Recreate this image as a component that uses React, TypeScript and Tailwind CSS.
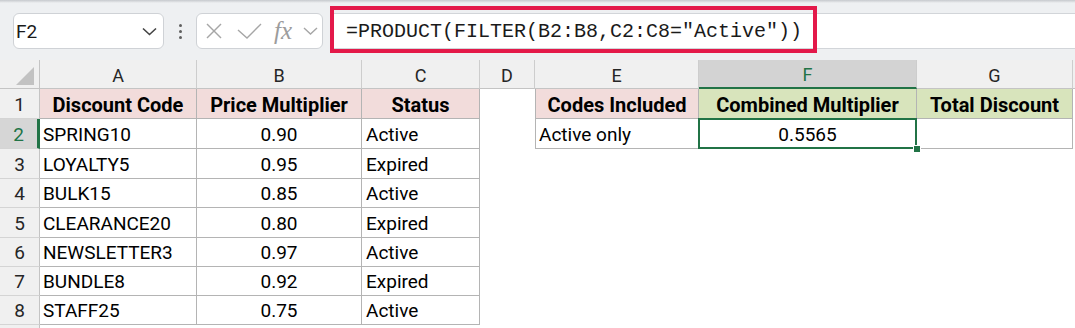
import React from "react";

const rows: [string, string, string][] = [
  ["SPRING10", "0.90", "Active"],
  ["LOYALTY5", "0.95", "Expired"],
  ["BULK15", "0.85", "Active"],
  ["CLEARANCE20", "0.80", "Expired"],
  ["NEWSLETTER3", "0.97", "Active"],
  ["BUNDLE8", "0.92", "Expired"],
  ["STAFF25", "0.75", "Active"],
];

const rowH = [
  "h-[30px]",
  "h-[30px]",
  "h-[30px]",
  "h-[29px]",
  "h-[30px]",
  "h-[29px]",
  "h-[29px]",
  "h-[29px]",
];

const cellBase = "shrink-0 flex items-end pb-[2px] leading-[22px]";
const headBase = "shrink-0 flex items-end justify-center pb-[2px] leading-[22px] font-bold text-[20px]";
const tb = "border-[#b4b4b4]";

function RowHead({ n, h, selected }: { n: number; h: string; selected?: boolean }) {
  return (
    <div
      className={`${h} w-[40px] shrink-0 flex items-end justify-center pb-[2px] leading-[22px] border-b border-[#d4d4d4] ${
        selected
          ? "bg-[#d6d6d6] text-[#217346] border-r-[3px] border-r-[#217346]"
          : "bg-[#f0f0f0] text-[#262626] border-r border-r-[#c4c4c4]"
      }`}
    >
      {n}
    </div>
  );
}

function ColHead({ w, label, selected }: { w: string; label: string; selected?: boolean }) {
  return (
    <div
      className={`${w} h-full shrink-0 flex items-center justify-center text-[18px] border-r border-[#cdcdcd] ${
        selected
          ? "bg-[#d3d3d3] text-[#217346] border-b-2 border-b-[#217346]"
          : "bg-[#f0f0f0] text-[#262626] border-b border-b-[#c4c4c4]"
      }`}
    >
      <span className="pt-[2px]">{label}</span>
    </div>
  );
}

export default function App() {
  return (
    <div className="w-[1075px] h-[328px] overflow-hidden bg-white font-['Roboto',sans-serif] text-[19px] text-black">
      {/* Toolbar */}
      <div className="h-[60px] bg-[#eef0f2] flex flex-col">
        <div className="h-[3px] bg-gradient-to-b from-[#c6c9cd] to-[#eef0f2]" />
        <div className="flex items-start pl-[13px] pt-[10px]">
          {/* Name box */}
          <div className="w-[151px] h-[36px] bg-white border border-[#cfd2d6] rounded-[6px] flex items-center justify-between pl-[2px] pr-[6px]">
            <span className="text-[19px] text-[#1a1a1a] pt-[3px]">F2</span>
            <svg width="15" height="9" viewBox="0 0 15 9">
              <polyline points="1,1.5 7.5,7.5 14,1.5" fill="none" stroke="#444" strokeWidth="1.6" />
            </svg>
          </div>
          {/* dots */}
          <div className="w-[32px] h-[36px] flex flex-col items-center justify-center gap-[3px]">
            <div className="w-[3px] h-[3px] rounded-full bg-[#5f5f5f]" />
            <div className="w-[3px] h-[3px] rounded-full bg-[#5f5f5f]" />
            <div className="w-[3px] h-[3px] rounded-full bg-[#5f5f5f]" />
          </div>
          {/* fx box */}
          <div className="w-[127px] h-[36px] bg-white border border-[#cfd2d6] rounded-[6px] flex items-center pl-[8px]">
            <svg width="18" height="16" viewBox="0 0 18 16">
              <line x1="2" y1="1" x2="16" y2="15" stroke="#a6a6a6" strokeWidth="1.4" />
              <line x1="16" y1="1" x2="2" y2="15" stroke="#a6a6a6" strokeWidth="1.4" />
            </svg>
            <svg className="ml-[14px]" width="25" height="16" viewBox="0 0 25 16">
              <polyline points="1,7 10,15 24,1" fill="none" stroke="#a6a6a6" strokeWidth="1.4" />
            </svg>
            <span className="ml-[12px] w-[24px] font-['Liberation_Serif',serif] italic text-[25px] leading-[30px] text-[#9c9c9c]">
              fx
            </span>
            <svg className="ml-[5px]" width="15" height="8" viewBox="0 0 15 8">
              <polyline points="1,1 7.5,7 14,1" fill="none" stroke="#a6a6a6" strokeWidth="1.4" />
            </svg>
          </div>
          {/* formula input */}
          <div className="relative ml-[7px] flex-1 h-[36px] bg-white border-y border-[#d2d5d9]">
            <div className="pl-[16px] font-['Liberation_Mono',monospace] text-[20px] leading-[34px] text-[#1a1a1a] pt-[1px]">
              =PRODUCT(FILTER(B2:B8,C2:C8="Active"))
            </div>
            <div className="absolute left-0 top-[-8px] w-[487px] h-[47px] border-4 border-[#e3194a]" />
          </div>
        </div>
      </div>

      {/* Column header row */}
      <div className="flex h-[29px]">
        <div className="w-[40px] h-full shrink-0 bg-[#f0f0f0] border-r border-b border-[#c4c4c4] flex items-end justify-end pr-[5px] pb-[3px]">
          <svg width="18" height="18" viewBox="0 0 18 18">
            <polygon points="18,0 18,18 0,18" fill="#c2c2c2" />
          </svg>
        </div>
        <ColHead w="w-[157px]" label="A" />
        <ColHead w="w-[165px]" label="B" />
        <ColHead w="w-[118px]" label="C" />
        <ColHead w="w-[55px]" label="D" />
        <ColHead w="w-[164px]" label="E" />
        <ColHead w="w-[218px]" label="F" selected />
        <ColHead w="w-[156px]" label="G" />
        <div className="flex-1 h-full bg-[#f0f0f0] border-b border-[#c4c4c4]" />
      </div>

      {/* Row 1 */}
      <div className="flex h-[30px]">
        <RowHead n={1} h="h-[30px]" />
        <div className={`${headBase} w-[157px] h-full bg-[#f2dcdb] border-r border-b ${tb}`}>Discount Code</div>
        <div className={`${headBase} w-[165px] h-full bg-[#f2dcdb] border-r border-b ${tb}`}>Price Multiplier</div>
        <div className={`${headBase} w-[118px] h-full bg-[#f2dcdb] border-r border-b ${tb}`}>Status</div>
        <div className="w-[55px] shrink-0" />
        <div className={`${headBase} w-[164px] h-full bg-[#f2dcdb] border-l border-r border-b ${tb}`}>Codes Included</div>
        <div className={`${headBase} w-[218px] h-full bg-[#d8e4bc] border-r border-b ${tb}`}>Combined Multiplier</div>
        <div className={`${headBase} w-[156px] h-full bg-[#d8e4bc] border-r border-b ${tb}`}>Total Discount</div>
      </div>

      {rows.map((r, i) => (
        <div key={i} className={`flex ${rowH[i + 1]}`}>
          <RowHead n={i + 2} h="h-full" selected={i === 0} />
          <div className={`${cellBase} w-[157px] h-full pl-[3px] border-r border-b ${tb}`}>{r[0]}</div>
          <div className={`${cellBase} w-[165px] h-full justify-center border-r border-b ${tb}`}>{r[1]}</div>
          <div className={`${cellBase} w-[118px] h-full pl-[4px] border-r border-b ${tb}`}>{r[2]}</div>
          <div className="w-[55px] shrink-0" />
          {i === 0 ? (
            <>
              <div className={`${cellBase} w-[164px] h-full pl-[3px] border-l border-r border-b ${tb}`}>Active only</div>
              <div className={`${cellBase} relative w-[218px] h-full justify-center border-r border-b ${tb}`}>
                0.5565
                <div className="absolute left-[-1px] top-[-1px] right-[-1px] bottom-[-1px] border-2 border-[#217346]" />
                <div className="absolute right-[-5px] bottom-[-5px] w-[8px] h-[8px] bg-[#217346] border border-white" />
              </div>
              <div className={`${cellBase} w-[156px] h-full border-r border-b ${tb}`} />
            </>
          ) : null}
        </div>
      ))}

      {/* partial row 9 */}
      <div className="flex h-[3px]">
        <div className="w-[40px] h-full bg-[#f0f0f0] border-r border-[#c4c4c4]" />
      </div>
    </div>
  );
}
